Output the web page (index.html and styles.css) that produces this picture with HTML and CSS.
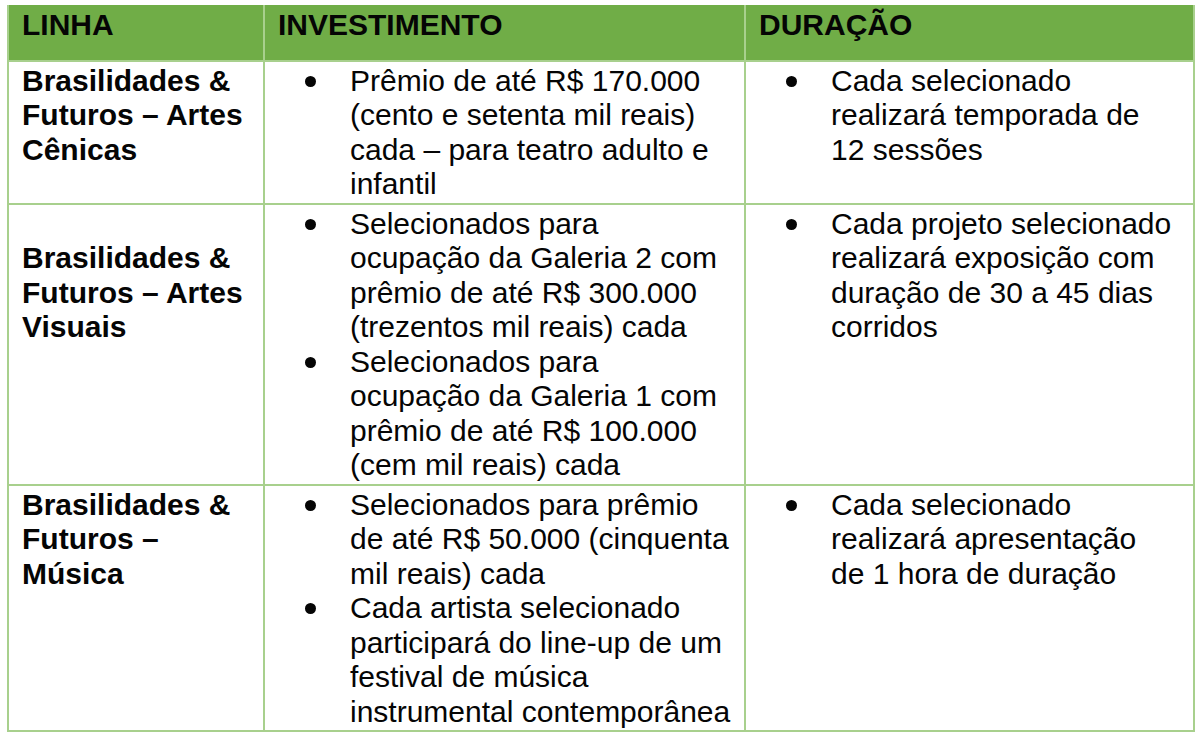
FILE: index.html
```html
<!DOCTYPE html>
<html lang="pt">
<head>
<meta charset="utf-8">
<title>Linhas</title>
<link rel="stylesheet" href="styles.css">
</head>
<body>
<div class="wrap">
<table class="grid">
  <colgroup>
    <col class="c1"><col class="c2"><col class="c3">
  </colgroup>
  <thead>
    <tr>
      <th>LINHA</th>
      <th>INVESTIMENTO</th>
      <th>DURAÇÃO</th>
    </tr>
  </thead>
  <tbody>
    <tr>
      <td class="name"><p>Brasilidades &amp; Futuros – Artes Cênicas</p></td>
      <td><ul><li>Prêmio de até R$ 170.000 (cento e setenta mil reais) cada – para teatro adulto e infantil</li></ul></td>
      <td class="dur"><ul><li>Cada selecionado realizará temporada de 12 sessões</li></ul></td>
    </tr>
    <tr>
      <td class="name"><p class="blank">&nbsp;</p><p>Brasilidades &amp; Futuros – Artes Visuais</p></td>
      <td><ul>
        <li>Selecionados para ocupação da Galeria 2 com prêmio de até R$ 300.000 (trezentos mil reais) cada</li>
        <li>Selecionados para ocupação da Galeria 1 com prêmio de até R$ 100.000 (cem mil reais) cada</li>
      </ul></td>
      <td class="dur"><ul><li>Cada projeto selecionado realizará exposição com duração de 30 a 45 dias corridos</li></ul></td>
    </tr>
    <tr>
      <td class="name"><p>Brasilidades &amp; Futuros – Música</p></td>
      <td><ul>
        <li>Selecionados para prêmio de até R$ 50.000 (cinquenta mil reais) cada</li>
        <li>Cada artista selecionado participará do line-up de um festival de música instrumental contemporânea</li>
      </ul></td>
      <td class="dur"><ul><li>Cada selecionado realizará apresentação de 1 hora de duração</li></ul></td>
    </tr>
  </tbody>
</table>
</div>
</body>
</html>
```
FILE: styles.css
```css
html, body {
  margin: 0;
  padding: 0;
  background: #ffffff;
}
.wrap {
  padding: 5px 7px 0 7px;
}
.grid {
  border-collapse: collapse;
  table-layout: fixed;
  width: 1186px;
  font-family: "Liberation Sans", Arial, sans-serif;
  font-size: 30px;
  line-height: 34.5px;
  color: #050505;
}
.c1 { width: 256px; }
.c2 { width: 481px; }
.c3 { width: 449px; }
.grid th {
  background: #70ad47;
  text-align: left;
  font-weight: bold;
  padding: 3px 13px 17px 13px;
  border: 2px solid #a8d08d;
  border-top: 0;
  vertical-align: top;
}
.grid td {
  border: 2px solid #a8d08d;
  vertical-align: top;
  padding: 2px 8px 1px 0;
}
.grid td.dur {
  padding-right: 18px;
}
.grid td.name {
  padding: 2px 10px 1px 13px;
  font-weight: bold;
}
.grid p {
  margin: 0;
}
.grid ul {
  margin: 0;
  padding: 0;
  list-style: none;
}
.grid li {
  display: flex;
}
.grid li::before {
  content: "";
  flex: 0 0 11px;
  height: 11px;
  border-radius: 50%;
  background: #050505;
  margin: 12px 34px 0 40px;
}
```
